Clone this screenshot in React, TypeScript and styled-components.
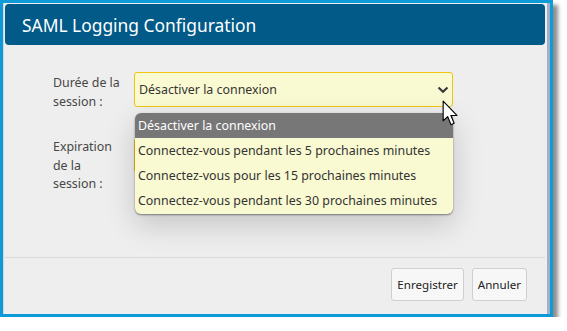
import React from 'react';
import styled, { createGlobalStyle } from 'styled-components';

const GlobalStyle = createGlobalStyle`
  html, body {
    margin: 0;
    padding: 0;
    background: #ffffff;
  }
  body {
    font-family: 'Noto Sans', 'Open Sans', sans-serif;
  }
`;

const Frame = styled.div`
  box-sizing: border-box;
  width: 553px;
  height: 317px;
  border: 3px solid #0e9ad9;
  box-shadow: 5px 5px 4px rgba(0, 0, 0, 0.45);
  display: flex;
`;

const Window = styled.div`
  flex: 1;
  display: flex;
  flex-direction: column;
  background: #eeeeee;
  border-left: 1px solid #d6d6d6;
  border-right: 3px solid #9fb1c9;
  padding: 1px 2px 0 1px;
`;

const Header = styled.div`
  height: 41px;
  flex-shrink: 0;
  display: flex;
  align-items: center;
  padding-left: 17px;
  background: #015a87;
  border-radius: 4px;
  color: #ffffff;
  font-size: 17.4px;
`;

const Body = styled.div`
  flex: 1;
  position: relative;
  display: flex;
  flex-direction: column;
  gap: 27px;
  padding: 27px 0 0 48px;
`;

const FormRow = styled.div`
  display: grid;
  grid-template-columns: 81px 319px;
  align-items: start;
`;

const Label = styled.div<{ lines: number }>`
  padding-top: ${({ lines }) => (lines > 2 ? 0 : 1)}px;
  color: #474747;
  font-size: 12.4px;
  line-height: ${({ lines }) => (lines > 2 ? 18.5 : 19)}px;
`;

const SelectWrap = styled.div`
  position: relative;
`;

const Select = styled.div`
  box-sizing: border-box;
  height: 35px;
  display: flex;
  align-items: center;
  justify-content: space-between;
  padding: 0 3px 0 4px;
  background: #fafad2;
  border: 1px solid #f1c40f;
  border-radius: 3px;
  color: #333333;
  font-size: 12.4px;
`;

const Menu = styled.div`
  position: absolute;
  top: 41px;
  left: 1px;
  width: 318px;
  box-sizing: border-box;
  padding: 0 0 1px;
  background: #fafad2;
  border-radius: 6px;
  overflow: hidden;
  box-shadow: 0 1px 2px rgba(0, 0, 0, 0.45), 0 10px 30px rgba(0, 0, 0, 0.18);
  z-index: 2;
`;

const Option = styled.div<{ active?: boolean }>`
  height: 25px;
  display: flex;
  align-items: center;
  padding-left: 3px;
  background: ${({ active }) => (active ? '#777777' : 'transparent')};
  color: ${({ active }) => (active ? '#ffffff' : '#333333')};
  font-size: 12.4px;
  white-space: nowrap;
`;

const Footer = styled.div`
  flex-shrink: 0;
  display: flex;
  justify-content: flex-end;
  gap: 8px;
  padding: 10px 18px 13px 0;
  border-top: 1px solid #d9d9d9;
`;

const Button = styled.button`
  height: 33px;
  padding: 0 5px;
  background: #f7f7f7;
  border: 1px solid #cfcfcf;
  border-radius: 3px;
  color: #222222;
  font-family: 'Noto Sans', 'Open Sans', sans-serif;
  font-size: 11.6px;
`;

const Cursor = styled.svg`
  position: absolute;
  left: 437px;
  top: 55px;
  z-index: 3;
`;

const Chevron = () => (
  <svg width="12" height="8" viewBox="0 0 12 8">
    <polyline points="1.5,1.5 6,5.8 10.5,1.5" fill="none" stroke="#3a3a3a" strokeWidth="2.2" />
  </svg>
);

const options = [
  'Désactiver la connexion',
  'Connectez-vous pendant les 5 prochaines minutes',
  'Connectez-vous pour les 15 prochaines minutes',
  'Connectez-vous pendant les 30 prochaines minutes',
];

export default function App() {
  return (
    <>
      <GlobalStyle />
      <Frame>
        <Window>
          <Header>SAML Logging Configuration</Header>
          <Body>
            <FormRow>
              <Label lines={2}>
                Durée de la
                <br />
                session :
              </Label>
              <SelectWrap>
                <Select>
                  <span>{options[0]}</span>
                  <Chevron />
                </Select>
                <Menu>
                  {options.map((o, i) => (
                    <Option key={o} active={i === 0}>
                      {o}
                    </Option>
                  ))}
                </Menu>
              </SelectWrap>
            </FormRow>
            <FormRow>
              <Label lines={3}>
                Expiration
                <br />
                de la
                <br />
                session :
              </Label>
              <SelectWrap>
                <Select />
              </SelectWrap>
            </FormRow>
            <Cursor width="18" height="28" viewBox="0 0 16 25">
              <path
                d="M1 1 L1 18.5 L5 14.8 L8 22 L10.8 20.8 L7.9 13.8 L13.3 13.8 Z"
                fill="#ffffff"
                stroke="#000000"
                strokeWidth="1"
                strokeLinejoin="round"
              />
            </Cursor>
          </Body>
          <Footer>
            <Button>Enregistrer</Button>
            <Button>Annuler</Button>
          </Footer>
        </Window>
      </Frame>
    </>
  );
}
